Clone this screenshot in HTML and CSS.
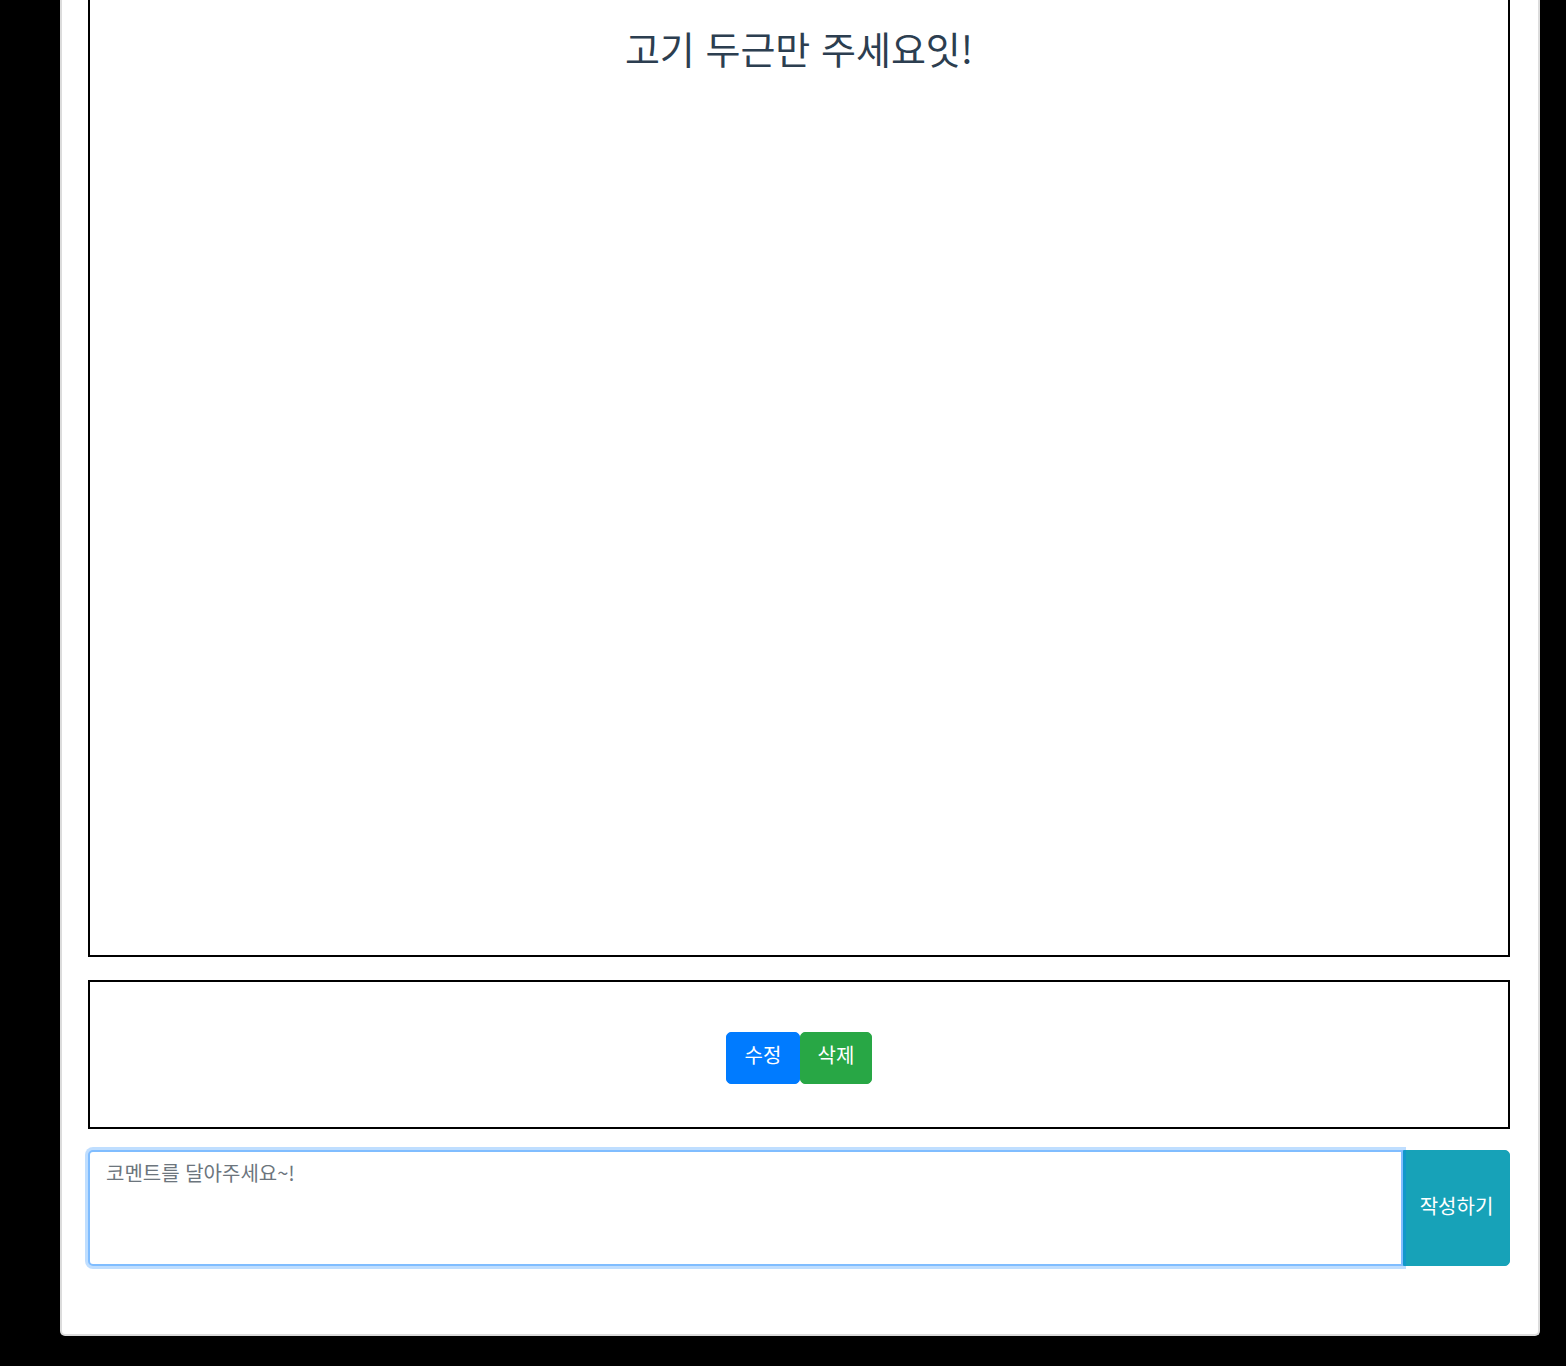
FILE: index.html
```html
<!DOCTYPE html>
<html lang="ko">
<head>
<meta charset="utf-8">
<title>게시글</title>
<link rel="stylesheet" href="styles.css">
</head>
<body>
<div class="card">
  <section class="post-body">
    <h2 class="post-title">고기 두근만 주세요잇!</h2>
  </section>
  <section class="post-actions">
    <button class="btn btn-primary">수정</button><button class="btn btn-success">삭제</button>
  </section>
  <div class="comment-group">
    <textarea class="comment-input" placeholder="코멘트를 달아주세요~!"></textarea>
    <button class="btn-submit">작성하기</button>
  </div>
</div>
</body>
</html>
```

FILE: styles.css
```css
html, body {
  margin: 0;
  padding: 0;
  background: #000;
  height: 100%;
  overflow: hidden;
}
body {
  font-family: "Noto Sans CJK KR", "Noto Sans", sans-serif;
}
.card {
  box-sizing: border-box;
  width: 1480px;
  margin: -40px 0 0 60px;
  background: #fff;
  border: 2px solid #dcdcdc;
  border-top: none;
  border-radius: 0 0 5px 5px;
  padding: 0 28px 68px 26px;
  display: flex;
  flex-direction: column;
}
.post-body {
  box-sizing: border-box;
  height: 997px;
  border: 2px solid #000;
  text-align: center;
}
.post-title {
  margin: 63px 0 0;
  font-size: 38px;
  font-weight: 400;
  line-height: 46px;
  color: #2c3e50;
}
.post-actions {
  box-sizing: border-box;
  margin-top: 23px;
  height: 149px;
  border: 2px solid #000;
  padding-top: 50px;
  text-align: center;
}
.btn {
  font-family: inherit;
  font-size: 20px;
  line-height: 28px;
  color: #fff;
  border: 1px solid transparent;
  border-radius: 5px;
  padding: 8px 16px 14px;
  height: 52px;
  width: 74px;
  vertical-align: top;
}
.btn-primary {
  background: #007bff;
  border-color: #007bff;
}
.btn-success {
  background: #28a745;
  border-color: #28a745;
  width: 72px;
}
.comment-group {
  margin-top: 21px;
  display: flex;
  height: 116px;
}
.comment-input {
  position: relative;
  z-index: 1;
  flex: 1;
  box-sizing: border-box;
  margin: 0;
  height: 116px;
  border: 2px solid #80bdff;
  border-radius: 5px 0 0 5px;
  box-shadow: 0 0 0 3px rgba(0, 123, 255, 0.25);
  padding: 7px 16px;
  font-family: inherit;
  font-size: 20px;
  line-height: 28px;
  color: #495057;
  resize: none;
  outline: none;
}
.comment-input::placeholder {
  color: #6c757d;
}
.btn-submit {
  box-sizing: border-box;
  width: 107px;
  height: 116px;
  margin: 0;
  background: #17a2b8;
  border: 1px solid #17a2b8;
  border-radius: 0 5px 5px 0;
  color: #fff;
  font-family: inherit;
  font-size: 20px;
  padding: 0 0 6px;
}
```
